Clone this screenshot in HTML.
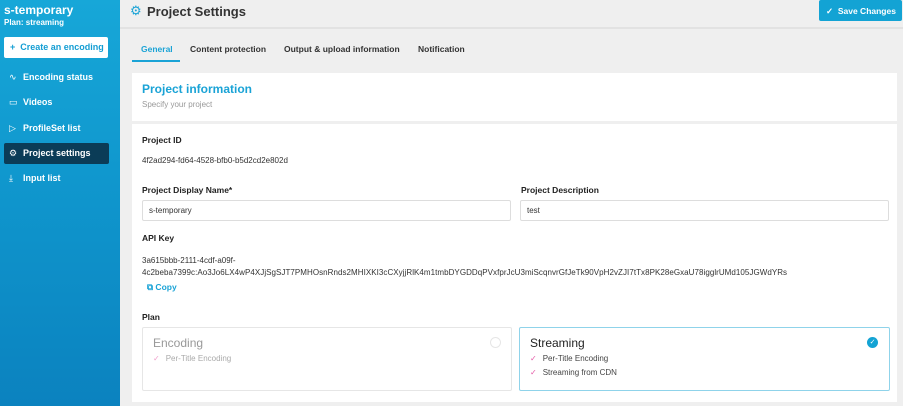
<!DOCTYPE html>
<html><head><style>
*{box-sizing:border-box;margin:0;padding:0}
body{width:903px;height:406px;overflow:hidden;background:#efefef;font-family:"Liberation Sans",Arial,sans-serif;position:relative;color:#222}
.a{position:absolute;white-space:nowrap}
#side{position:absolute;left:0;top:0;width:120px;height:406px;background:linear-gradient(180deg,#17a7d8 0%,#0f95cc 50%,#0b82bf 100%)}
.nav{position:absolute;left:9px;font-size:9px;font-weight:bold;color:#fff}
.nav span{display:inline-block;width:14px;font-weight:normal}
.lbl{font-size:8.5px;font-weight:bold;color:#222}
.val{font-size:8px;color:#333}
.inp{position:absolute;height:21px;border:1px solid #ddd;border-radius:2px;background:#fff;font-size:8px;color:#333;padding:5px 6px}
.ck{color:#e45aa8;font-size:8px;margin-right:6px}
</style></head><body>
<div id="side">
<div class="a" style="left:4px;top:3px;color:#fff;font-weight:bold;font-size:12px">s-temporary</div>
<div class="a" style="left:4px;top:18px;color:#fff;font-weight:bold;font-size:8px">Plan: streaming</div>
<div class="a" style="left:4px;top:37px;width:104px;height:21px;background:#fff;border-radius:2px;color:#129dd3;font-size:9px;font-weight:bold;padding:5px 0 0 6px">+&nbsp; Create an encoding</div>
<div class="nav" style="top:72px"><span>∿</span>Encoding status</div>
<div class="nav" style="top:97px"><span>▭</span>Videos</div>
<div class="nav" style="top:123px"><span>▷</span>ProfileSet list</div>
<div class="a" style="left:4px;top:143px;width:105px;height:21px;background:#0b3c57;border-radius:2px"></div>
<div class="nav" style="top:148px"><span>⚙</span>Project settings</div>
<div class="nav" style="top:173px"><span>⤓</span>Input list</div>
</div>
<div class="a" style="left:120px;top:0;width:783px;height:29px;background:#efefef;border-bottom:2px solid #e2e2e2"></div>
<div class="a" style="left:130px;top:3px;color:#1aa3d6;font-size:13px">⚙</div>
<div class="a" style="left:147px;top:4px;font-size:13px;font-weight:bold;color:#333">Project Settings</div>
<div class="a" style="left:819px;top:0;width:83px;height:21px;background:#13a3d4;border-radius:2px;color:#fff;font-size:8.5px;font-weight:bold;padding:6px 0 0 7px">✓&nbsp; Save Changes</div>
<div class="a" style="left:141px;top:44px;font-size:8.5px;font-weight:bold;color:#1aa3d6">General</div>
<div class="a" style="left:132px;top:60px;width:48px;height:2px;background:#1aa3d6"></div>
<div class="a" style="left:190px;top:44px;font-size:8.5px;font-weight:bold;color:#333">Content protection</div>
<div class="a" style="left:284px;top:44px;font-size:8.5px;font-weight:bold;color:#333">Output &amp; upload information</div>
<div class="a" style="left:418px;top:44px;font-size:8.5px;font-weight:bold;color:#333">Notification</div>
<div class="a" style="left:132px;top:73px;width:765px;height:329px;background:#fff"></div>
<div class="a" style="left:132px;top:121px;width:765px;height:3px;background:#efefef"></div>
<div class="a" style="left:142px;top:82px;font-size:12px;font-weight:bold;color:#1aa3d6">Project information</div>
<div class="a" style="left:142px;top:100px;font-size:8px;color:#999">Specify your project</div>
<div class="a lbl" style="left:142px;top:135px">Project ID</div>
<div class="a val" style="left:142px;top:156px">4f2ad294-fd64-4528-bfb0-b5d2cd2e802d</div>
<div class="a lbl" style="left:142px;top:185px">Project Display Name*</div>
<div class="inp" style="left:142px;top:200px;width:369px">s-temporary</div>
<div class="a lbl" style="left:521px;top:185px">Project Description</div>
<div class="inp" style="left:520px;top:200px;width:369px">test</div>
<div class="a lbl" style="left:142px;top:233px">API Key</div>
<div class="a val" style="left:142px;top:256px">3a615bbb-2111-4cdf-a09f-</div>
<div class="a val" style="left:142px;top:268px;letter-spacing:0.05px">4c2beba7399c:Ao3Jo6LX4wP4XJjSgSJT7PMHOsnRnds2MHIXKI3cCXyjjRlK4m1tmbDYGDDqPVxfprJcU3miScqnvrGfJeTk90VpH2vZJI7tTx8PK28eGxaU78igglrUMd105JGWdYRs</div>
<div class="a" style="left:147px;top:282px;font-size:8.5px;font-weight:bold;color:#1aa3d6">⧉ Copy</div>
<div class="a lbl" style="left:142px;top:312px">Plan</div>
<div class="a" style="left:142px;top:327px;width:370px;height:64px;border:1px solid #e6e6e6;border-radius:2px"></div>
<div class="a" style="left:153px;top:336px;font-size:12px;color:#999">Encoding</div>
<div class="a" style="left:153px;top:354px;font-size:8px;color:#aaa"><span class="ck" style="color:#f0a0cc">✓</span>Per-Title Encoding</div>
<div class="a" style="left:490px;top:337px;width:11px;height:11px;border:1px solid #e6e6e6;border-radius:50%"></div>
<div class="a" style="left:519px;top:327px;width:371px;height:64px;border:1px solid #8fd3ea;border-radius:2px"></div>
<div class="a" style="left:530px;top:336px;font-size:12px;color:#222">Streaming</div>
<div class="a" style="left:530px;top:354px;font-size:8px;color:#444"><span class="ck">✓</span>Per-Title Encoding</div>
<div class="a" style="left:530px;top:368px;font-size:8px;color:#444"><span class="ck">✓</span>Streaming from CDN</div>
<div class="a" style="left:867px;top:337px;width:11px;height:11px;background:#13a3d4;border-radius:50%;color:#fff;font-size:7px;text-align:center;line-height:11px">✓</div>
</body></html>
